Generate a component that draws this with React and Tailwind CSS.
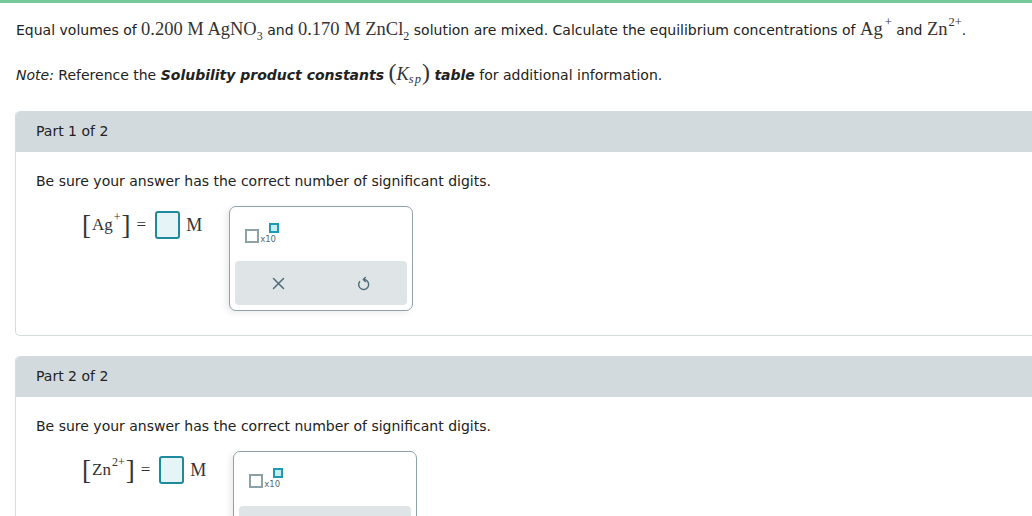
import React from "react";

const sans = "font-['Verdana','DejaVu_Sans',sans-serif]";
const serif = "font-['Liberation_Serif','Times_New_Roman',serif]";

function Template() {
  return (
    <div className="relative h-[20px] w-[40px]">
      <div className="absolute left-0 top-[6px] h-[14px] w-[14px] border-2 border-[#8ea1a6] bg-white" />
      <span className={`absolute left-[15px] top-[12px] text-[8.5px] leading-none text-[#5a6a6f] ${sans}`}>x10</span>
      <div className="absolute left-[24px] top-0 h-[10px] w-[10px] border-2 border-[#1b9cb4] bg-[#c5edf4]" />
    </div>
  );
}

function UndoIcon() {
  return (
    <svg width="16" height="16" viewBox="0 0 16 16" fill="none" stroke="#4d6b76" strokeWidth="1.4" strokeLinecap="round" strokeLinejoin="round">
      <path d="M7.5 4.5 A5 5 0 1 1 3.6 6.6" />
      <path d="M9.3 2.6 L7.4 4.5 L9.3 6.4" />
    </svg>
  );
}

function Popup() {
  return (
    <div className="w-[184px] rounded-[7px] border border-[#8fa2a8] bg-white px-[5px] pb-[5px] shadow-[-3px_2px_6px_rgba(0,0,0,0.08)]">
      <div className="h-[54px] pl-[10px] pt-[16px]">
        <Template />
      </div>
      <div className="grid h-[44px] grid-cols-2 items-center justify-items-center rounded-[4px] bg-[#dfe5e7]">
        <svg width="13" height="13" viewBox="0 0 13 13" stroke="#4d6b76" strokeWidth="1.5" strokeLinecap="round">
          <path d="M1.5 1.5 L11.5 11.5 M11.5 1.5 L1.5 11.5" />
        </svg>
        <UndoIcon />
      </div>
    </div>
  );
}

function Part({ n, label, sup }) {
  return (
    <div className="ml-[15px] rounded-l-[5px] border-b border-l border-[#d3dcdd]">
      <div className={`flex h-[41px] items-center rounded-tl-[5px] bg-[#d2dadd] pl-[20px] text-[14px] text-[#222] ${sans}`}>
        Part {n} of 2
      </div>
      <div className="pl-[20px] pt-[21px] pb-[24px]">
        <div className={`h-[17px] text-[14px] leading-[17px] text-[#222] ${sans}`}>
          Be sure your answer has the correct number of significant digits.
        </div>
        <div className="mt-[16px] flex items-start pl-[46px]">
          <div className={`mt-[5px] flex h-[28px] items-center text-[17px] text-[#333] ${serif}`}>
            <span className="text-[27px] font-light leading-none">[</span>
            <span className="ml-[1px]">{label}</span>
            <span className="relative -top-[8px] ml-[1px] text-[12px] leading-none">{sup}</span>
            <span className="ml-[1px] text-[27px] font-light leading-none">]</span>
            <span className="ml-[6px]">=</span>
            <span className="ml-[9px] h-[28px] w-[25px] rounded-[3px] border-2 border-[#1f8a9e] bg-[#e4f4f7]" />
            <span className="ml-[6px] text-[18px]">M</span>
          </div>
          <div className="ml-[27px]">
            <Popup />
          </div>
        </div>
      </div>
    </div>
  );
}

export default function App() {
  return (
    <div className="h-[516px] w-[1032px] overflow-hidden bg-white">
      <div className="h-[3px] bg-[#76c79a]" />
      <div className={`px-[16px] pt-[15px] text-[14px] text-[#222] ${sans}`}>
        <p className="h-[24px] leading-[24px]">
          Equal volumes of{" "}
          <span className={`text-[18.5px] leading-none text-[#333] ${serif}`}>0.200 M AgNO<sub className="relative top-[5px] text-[12px] leading-none">3</sub></span> and{" "}
          <span className={`text-[18.5px] leading-none text-[#333] ${serif}`}>0.170 M ZnCl<sub className="relative top-[5px] text-[12px] leading-none">2</sub></span> solution are mixed. Calculate the equilibrium concentrations of{" "}
          <span className={`text-[18.5px] leading-none text-[#333] ${serif}`}>Ag<span className="relative -top-[9px] ml-[2px] text-[12.5px]">+</span></span> and{" "}
          <span className={`text-[18.5px] leading-none text-[#333] ${serif}`}>Zn<span className="relative -top-[9px] ml-[1px] text-[12.5px]">2+</span></span>.
        </p>
        <p className="mt-[18px] h-[24px] leading-[24px]">
          <i>Note:</i> Reference the <b><i>Solubility product constants</i></b>{" "}
          <span className={`text-[18.5px] leading-none text-[#333] ${serif}`}>
            <span className="text-[24px] font-light leading-none">(</span>
            <i>K</i>
            <sub className="text-[12.5px] leading-none tracking-[1px]"><i>sp</i></sub>
            <span className="text-[24px] font-light leading-none">)</span>
          </span>{" "}
          <b><i>table</i></b> for additional information.
        </p>
      </div>
      <div className="mt-[27px]">
        <Part n={1} label="Ag" sup="+" />
      </div>
      <div className="mt-[20px]">
        <Part n={2} label="Zn" sup="2+" />
      </div>
    </div>
  );
}
